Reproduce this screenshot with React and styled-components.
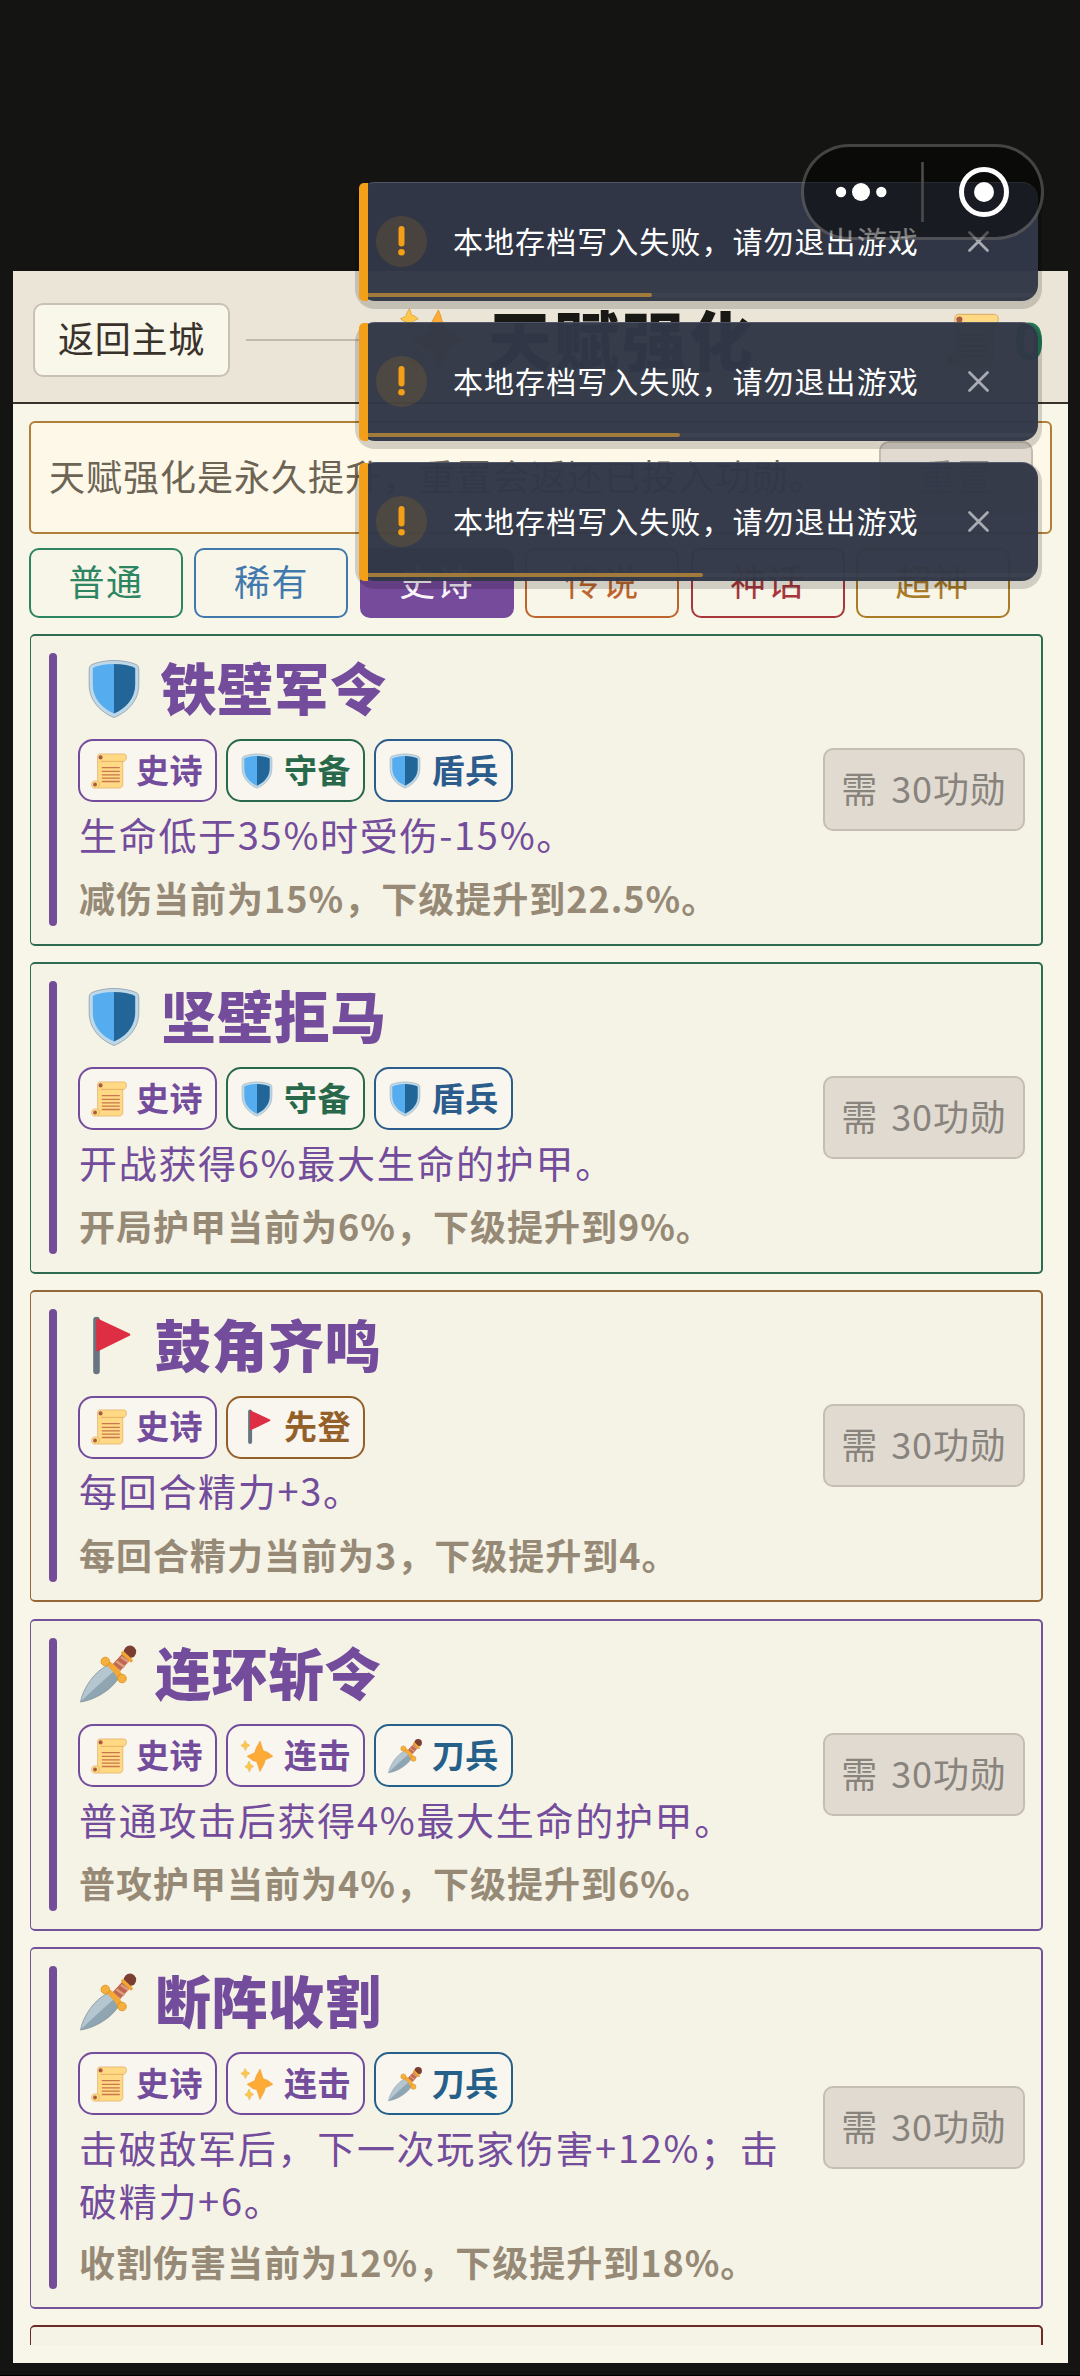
import React, { useState } from 'react';
import styled, { createGlobalStyle } from 'styled-components';

const GlobalStyle = createGlobalStyle`
  * {
    box-sizing: border-box;
  }

  body {
    margin: 0;
    background: #141412;
    font-family: 'Noto Sans CJK SC', 'Noto Sans', sans-serif;
    font-size: 36px;
  }

  button {
    font-family: inherit;
    padding: 0;
  }
`;

const Screen = styled.div`
  position: relative;
  height: 2376px;
  padding: 271px 12px 13px 13px;
  background: #141412;
  border-bottom: 1px solid #000;
  overflow: hidden;
`;

const Panel = styled.main`
  display: flex;
  flex-direction: column;
  height: 2092px;
  padding-bottom: 18px;
  background: #f8f5e9;
`;

const Header = styled.header`
  display: flex;
  align-items: center;
  height: 133px;
  flex-shrink: 0;
  padding: 6px 24px 0 20px;
  background: #ebe5d7;
  border-bottom: 2px solid #38342c;
`;

const BackButton = styled.button`
  width: 197px;
  height: 74px;
  padding-bottom: 5px;
  background: #f9f6ea;
  border: 2px solid #c9c2b4;
  border-radius: 10px;
  color: #38322a;
  font-size: 36px;
  letter-spacing: 0.8px;
  line-height: 60px;
`;

const HeaderLine = styled.div`
  flex: 1;
  height: 2px;
  margin: 0 16px;
  background: #c2bbac;
`;

const Title = styled.h1`
  display: flex;
  align-items: center;
  gap: 20px;
  margin: 0;
  padding-bottom: 6px;
  color: #181814;
  font-size: 64px;
  font-weight: 900;
  letter-spacing: 3px;
  line-height: 72px;

  svg {
    margin-top: 6px;
  }
`;

const Merit = styled.div`
  display: flex;
  align-items: center;
  justify-content: flex-end;
  gap: 15px;
  min-width: 121px;
  color: #237a58;
  font-family: 'Noto Sans', sans-serif;
  font-size: 52px;
  font-weight: 700;
  line-height: 60px;
`;

const Notice = styled.section`
  display: flex;
  align-items: center;
  justify-content: space-between;
  flex-shrink: 0;
  height: 113px;
  margin: 17px 16px 14px;
  padding: 0 17px 0 18px;
  background: #fef8e8;
  border: 2px solid #b0803a;
  border-radius: 6px;
  color: #6c6454;
  font-size: 36px;
  letter-spacing: 1px;
`;

const NoticeText = styled.span`
  padding-bottom: 5px;
`;

const ResetButton = styled.button`
  width: 154px;
  height: 74px;
  padding-bottom: 5px;
  background: #e1dad0;
  border: 2px solid #c3bbb0;
  border-radius: 10px;
  color: #8b8780;
  font-size: 36px;
  letter-spacing: 1px;
`;

const Tabs = styled.nav`
  display: flex;
  flex-shrink: 0;
  gap: 11.4px;
  padding: 0 16px;
`;

const Tab = styled.button`
  width: 154px;
  height: 70px;
  padding-bottom: 6px;
  background: ${props => (props.$active ? props.$color : 'transparent')};
  border: 2px solid ${props => props.$color};
  border-radius: 10px;
  color: ${props => (props.$active ? '#fbf4fb' : props.$color)};
  font-size: 36px;
  letter-spacing: 1.5px;
  line-height: 58px;
`;

const List = styled.div`
  flex: 1;
  margin-top: 15.5px;
  padding: 0 25px 0 17px;
  overflow: hidden;
`;

const Card = styled.article`
  display: flex;
  align-items: center;
  min-height: 312px;
  margin-bottom: 16.4px;
  padding: 17px 16px 18px 18px;
  background: #f5f2e6;
  border: 2px solid ${props => props.$color};
  border-left-width: 1px;
  border-radius: 5px;
`;

const Stripe = styled.div`
  align-self: stretch;
  width: 8px;
  margin-right: 21px;
  background: #744d99;
  border-radius: 4px;
`;

const CardBody = styled.div`
  flex: 1;
  padding-right: 31px;
`;

const CardName = styled.h2`
  display: flex;
  align-items: center;
  gap: 17px;
  height: 72px;
  margin: 0;
  padding-bottom: 7px;
  color: #734c9c;
  font-size: 56px;
  font-weight: 900;
  letter-spacing: 0.5px;
  line-height: 65px;

  svg {
    margin-top: 7px;
  }
`;

const Tags = styled.div`
  display: flex;
  gap: 8.7px;
  margin: 14px 0 4.5px;
`;

const Tag = styled.span`
  display: flex;
  align-items: center;
  gap: 9px;
  width: 139.2px;
  height: 63px;
  padding: 0 0 4px 11px;
  background: #f9f6ef;
  border: 2px solid ${props => props.$color};
  border-radius: 15px;
  color: ${props => props.$color};
  font-size: 33px;
  font-weight: 700;
  letter-spacing: 0.6px;
  line-height: 54px;
  white-space: nowrap;

  svg {
    margin-top: 4px;
  }
`;

const Effect = styled.p`
  min-height: 55px;
  margin: 0;
  padding-left: 1px;
  color: #734c9c;
  font-size: 38px;
  letter-spacing: 1.7px;
  line-height: 53px;
`;

const Growth = styled.p`
  margin: 11.5px 0 3px;
  padding-left: 1px;
  color: #968a76;
  font-size: 36px;
  font-weight: 700;
  letter-spacing: 1px;
  line-height: 49px;
`;

const CostButton = styled.button`
  flex-shrink: 0;
  width: 202px;
  height: 83px;
  padding-bottom: 5px;
  background: #e1dad0;
  border: 2px solid #c5beb2;
  border-radius: 10px;
  color: #88847d;
  font-size: 36px;
  letter-spacing: 0.9px;
  word-spacing: 4px;
  line-height: 70px;
`;

const ToastStack = styled.div`
  position: absolute;
  top: 181.5px;
  left: 359px;
  display: flex;
  flex-direction: column;
  gap: 20.5px;
  width: 679px;
`;

const ToastBox = styled.div`
  position: relative;
  display: flex;
  align-items: center;
  height: 119.5px;
  padding-left: 17px;
  background: rgba(49, 55, 71, 0.975);
  border-top: 1px solid rgba(110, 115, 135, 0.5);
  border-radius: 16px;
  box-shadow: 0 4px 0 4px rgba(0, 0, 0, 0.16);
`;

const ToastEdge = styled.div`
  position: absolute;
  top: 0;
  left: 0;
  width: 9px;
  height: 100%;
  background: #f39f18;
  border-radius: 5px 0 0 5px;
`;

const ToastBadge = styled.div`
  width: 51px;
  height: 51px;
  border-radius: 50%;
  background: rgba(243, 156, 18, 0.13);
`;

const ToastText = styled.div`
  flex: 1;
  margin-left: 26px;
  padding-bottom: 4px;
  color: #fff;
  font-size: 30px;
  letter-spacing: 1.05px;
  line-height: 44px;
  white-space: nowrap;
`;

const CloseButton = styled.button`
  display: flex;
  margin-right: 48px;
  background: none;
  border: none;
`;

const ToastTrack = styled.div`
  position: absolute;
  left: 9px;
  right: 4px;
  bottom: 4px;
  height: 4px;
  background: rgba(255, 255, 255, 0.035);
`;

const ToastProgress = styled.div`
  height: 4px;
  border-radius: 0 2px 2px 0;
  background: #a17b3b;
`;

const Capsule = styled.div`
  position: absolute;
  top: 144px;
  left: 801px;
  display: flex;
  align-items: center;
  width: 243px;
  height: 96px;
  background: rgba(0, 0, 0, 0.5);
  border: 3px solid rgba(255, 255, 255, 0.24);
  border-radius: 48px;
`;

// four pointed star with concave sides
const spark = (cx, cy, rx, ry) => {
  const a = rx * 0.25;
  const b = ry * 0.25;
  return `M${cx} ${cy - ry}C${cx + a * 0.6} ${cy - ry + b} ${cx + a * 0.7} ${cy - b * 1.3} ${cx + a * 1.5} ${cy - b * 1.3}
    S${cx + rx - a} ${cy - b * 0.6} ${cx + rx} ${cy}
    C${cx + rx - a} ${cy + b * 0.6} ${cx + a * 1.5} ${cy + b * 0.7} ${cx + a * 1.5} ${cy + b * 1.3}
    S${cx + a * 0.6} ${cy + ry - b} ${cx} ${cy + ry}
    C${cx - a * 0.6} ${cy + ry - b} ${cx - a * 0.7} ${cy + b * 1.3} ${cx - a * 1.5} ${cy + b * 1.3}
    S${cx - rx + a} ${cy + b * 0.6} ${cx - rx} ${cy}
    C${cx - rx + a} ${cy - b * 0.6} ${cx - a * 1.5} ${cy - b * 0.7} ${cx - a * 1.5} ${cy - b * 1.3}
    S${cx - a * 0.6} ${cy - ry + b} ${cx} ${cy - ry}Z`;
};

const iconShapes = {
  shield: (
    <>
      <path
        d="M30 1.5C38 1.5 46 3 52 5.5C54 6.5 54.8 8 54.8 11V26C54.8 41 44 53 30 58.5C16 53 5.2 41 5.2 26V11C5.2 8 6 6.5 8 5.5C14 3 22 1.5 30 1.5Z"
        fill="#bfd8e8"
        stroke="#93a5b0"
        strokeWidth="0.9"
      />
      <path d="M30 5C21 5 14 6.500 8.800 9V26C8.800 39 18 49.500 30 54.600Z" fill="#55acee" />
      <path d="M30 5C39 5 46 6.500 51.200 9V26C51.200 39 42 49.500 30 54.600Z" fill="#226699" />
    </>
  ),
  flag: (
    <>
      <path d="M18.500 4V55" stroke="#66757f" strokeWidth="6.600" strokeLinecap="round" />
      <path
        d="M19.500 4L51 18.700L19.500 34Z"
        fill="#dd2e44"
        stroke="#dd2e44"
        strokeWidth="2.600"
        strokeLinejoin="round"
      />
    </>
  ),
  dagger: (
    <>
      <path d="M2.500 58C5 44 17 27 29.500 21.500L41 33C35 45 17 56 2.500 58Z" fill="#b4c6d0" />
      <path d="M2.500 58C13 47 25 37 35.500 27.500L41 33C35 45 17 56 2.500 58Z" fill="#8fa5b2" />
      <path
        d="M2.500 58C5 44 17 27 29.500 21.500L41 33C35 45 17 56 2.500 58Z"
        fill="none"
        stroke="#8b9ba5"
        strokeWidth="0.9"
      />
      <path d="M38 24L49 12" stroke="#c1694f" strokeWidth="10" />
      <path d="M34.500 22.500L42.500 27M38.500 17.500L46.500 23M43 13L50.500 18" stroke="#dd9c86" strokeWidth="2.200" />
      <circle cx="52" cy="7.800" r="6.200" fill="#7b3f32" />
      <path d="M45 9L53 16.500" stroke="#f0a532" strokeWidth="3.600" strokeLinecap="round" />
      <path d="M28 18.500Q36 22 43 34" fill="none" stroke="#f3a933" strokeWidth="5.600" strokeLinecap="round" />
      <circle cx="27.300" cy="17.500" r="4.300" fill="#f6b13d" stroke="#d98c26" strokeWidth="0.8" />
      <circle cx="44" cy="34.500" r="4.300" fill="#f6b13d" stroke="#d98c26" strokeWidth="0.8" />
    </>
  ),
  scroll: (
    <>
      <path
        d="M15.500 1.500H54C58 1.500 59.500 4 59 8C58.500 12.500 56 14 53 14V52C53 56 50.500 58.500 47 58.500H6C3 58.500 1 56 1 52.500C1 48.500 3.500 46.500 7 46.500H11V6C11 3 12.500 1.500 15.500 1.500Z"
        fill="#ffd983"
        stroke="#d9a45a"
        strokeWidth="1"
      />
      <path d="M16 14H54" stroke="#e5b567" strokeWidth="1.800" />
      <path d="M11 46.500C15 48 15 55 11 58" fill="none" stroke="#e5b567" strokeWidth="1.500" />
      <circle cx="16" cy="7.300" r="3.400" fill="#a95a44" />
      <circle cx="6.800" cy="52.500" r="3.200" fill="#a95a44" />
      <path d="M18 24.500H48M18 30.500H48M18 36.500H48M18 42H48M18 47.500H48" stroke="#c8774f" strokeWidth="2.100" />
    </>
  ),
  sparkles: (
    <>
      <path d={spark(35, 30.5, 21.5, 25.5)} fill="#fdaa36" stroke="#e39a3a" strokeWidth="0.8" />
      <path d={spark(10.5, 12.5, 7.5, 8.5)} fill="#ffc84a" stroke="#d9a648" strokeWidth="0.8" />
      <path d={spark(17, 47.5, 7.5, 9)} fill="#ffc84a" stroke="#d9a648" strokeWidth="0.8" />
    </>
  ),
};

const IconSvg = styled.svg`
  flex-shrink: 0;
  margin-left: ${props => props.$indent || 0}px;
`;

const Icon = ({ name, size, indent }) => (
  <IconSvg width={size} height={size} viewBox="0 0 60 60" $indent={indent}>
    {iconShapes[name]}
  </IconSvg>
);

const rarities = [
  { name: '普通', color: '#2e8562' },
  { name: '稀有', color: '#4279ad' },
  { name: '史诗', color: '#764b9c' },
  { name: '传说', color: '#bd652c' },
  { name: '神话', color: '#a8373c' },
  { name: '超神', color: '#aa7c28' },
];

const epicTag = { icon: 'scroll', text: '史诗', color: '#734c9c' };
const guardTag = { icon: 'shield', text: '守备', color: '#27694a' };
const shieldTag = { icon: 'shield', text: '盾兵', color: '#2b5c8b' };
const vanguardTag = { icon: 'flag', text: '先登', color: '#94602a' };
const comboTag = { icon: 'sparkles', text: '连击', color: '#734c9c' };
const bladeTag = { icon: 'dagger', text: '刀兵', color: '#24608a' };

const talents = [
  {
    name: '铁壁军令',
    icon: 'shield',
    color: '#2f6b50',
    tags: [epicTag, guardTag, shieldTag],
    effect: '生命低于35%时受伤-15%。',
    growth: '减伤当前为15%，下级提升到22.5%。',
  },
  {
    name: '坚壁拒马',
    icon: 'shield',
    color: '#2f6b50',
    tags: [epicTag, guardTag, shieldTag],
    effect: '开战获得6%最大生命的护甲。',
    growth: '开局护甲当前为6%，下级提升到9%。',
  },
  {
    name: '鼓角齐鸣',
    icon: 'flag',
    color: '#966838',
    tags: [epicTag, vanguardTag],
    effect: '每回合精力+3。',
    growth: '每回合精力当前为3，下级提升到4。',
  },
  {
    name: '连环斩令',
    icon: 'dagger',
    color: '#72549a',
    tags: [epicTag, comboTag, bladeTag],
    effect: '普通攻击后获得4%最大生命的护甲。',
    growth: '普攻护甲当前为4%，下级提升到6%。',
  },
  {
    name: '断阵收割',
    icon: 'dagger',
    color: '#72549a',
    tags: [epicTag, comboTag, bladeTag],
    effect: '击破敌军后，下一次玩家伤害+12%；击破精力+6。',
    growth: '收割伤害当前为12%，下级提升到18%。',
  },
];

const toasts = [
  { id: 1, progress: 284 },
  { id: 2, progress: 312 },
  { id: 3, progress: 335 },
];

const Toast = ({ progress }) => (
  <ToastBox>
    <ToastEdge />
    <ToastBadge>
      <svg width="51" height="51" viewBox="0 0 51 51">
        <path d="M25.500 13V27.500" stroke="#f39f18" strokeWidth="6" strokeLinecap="round" />
        <circle cx="25.500" cy="36.300" r="3.300" fill="#f39f18" />
      </svg>
    </ToastBadge>
    <ToastText>本地存档写入失败，请勿退出游戏</ToastText>
    <CloseButton aria-label="关闭">
      <svg width="23" height="23" viewBox="0 0 23 23">
        <path d="M2.500 2.500L20.500 20.500M20.500 2.500L2.500 20.500" stroke="#a9abb2" strokeWidth="2.800" strokeLinecap="round" />
      </svg>
    </CloseButton>
    <ToastTrack>
      <ToastProgress style={{ width: progress }} />
    </ToastTrack>
  </ToastBox>
);

const App = () => {
  const [activeRarity, setActiveRarity] = useState('史诗');

  return (
    <Screen>
      <GlobalStyle />
      <Panel>
        <Header>
          <BackButton>返回主城</BackButton>
          <HeaderLine />
          <Title>
            <Icon name="sparkles" size={71} />
            天赋强化
          </Title>
          <HeaderLine />
          <Merit>
            <Icon name="scroll" size={54} />
            <span>0</span>
          </Merit>
        </Header>

        <Notice>
          <NoticeText>天赋强化是永久提升，重置会返还已投入功勋。</NoticeText>
          <ResetButton disabled>重置</ResetButton>
        </Notice>

        <Tabs>
          {rarities.map(rarity => (
            <Tab
              key={rarity.name}
              $color={rarity.color}
              $active={rarity.name === activeRarity}
              onClick={() => setActiveRarity(rarity.name)}
            >
              {rarity.name}
            </Tab>
          ))}
        </Tabs>

        <List>
          {talents.map(talent => (
            <Card key={talent.name} $color={talent.color}>
              <Stripe />
              <CardBody>
                <CardName>
                  <Icon name={talent.icon} size={60} indent={talent.icon === 'shield' ? 5.5 : 0} />
                  {talent.name}
                </CardName>
                <Tags>
                  {talent.tags.map(tag => (
                    <Tag key={tag.text} $color={tag.color}>
                      <Icon name={tag.icon} size={36} />
                      {tag.text}
                    </Tag>
                  ))}
                </Tags>
                <Effect>{talent.effect}</Effect>
                <Growth>{talent.growth}</Growth>
              </CardBody>
              <CostButton disabled>需 30功勋</CostButton>
            </Card>
          ))}
          <Card $color="#6b2b26" />
        </List>
      </Panel>

      <ToastStack>
        {toasts.map(toast => (
          <Toast key={toast.id} progress={toast.progress} />
        ))}
      </ToastStack>

      <Capsule>
        <svg width="237" height="90" viewBox="0 0 237 90">
          <circle cx="37" cy="45" r="5.200" fill="#fff" />
          <circle cx="57" cy="45" r="9" fill="#fff" />
          <circle cx="77.300" cy="45" r="5.200" fill="#fff" />
          <path d="M118.500 15V75" stroke="#4b4b4d" strokeWidth="2.600" />
          <circle cx="180" cy="45" r="22.500" fill="none" stroke="#fff" strokeWidth="5" />
          <circle cx="180" cy="45" r="10" fill="#fff" />
        </svg>
      </Capsule>
    </Screen>
  );
};

export default App;
